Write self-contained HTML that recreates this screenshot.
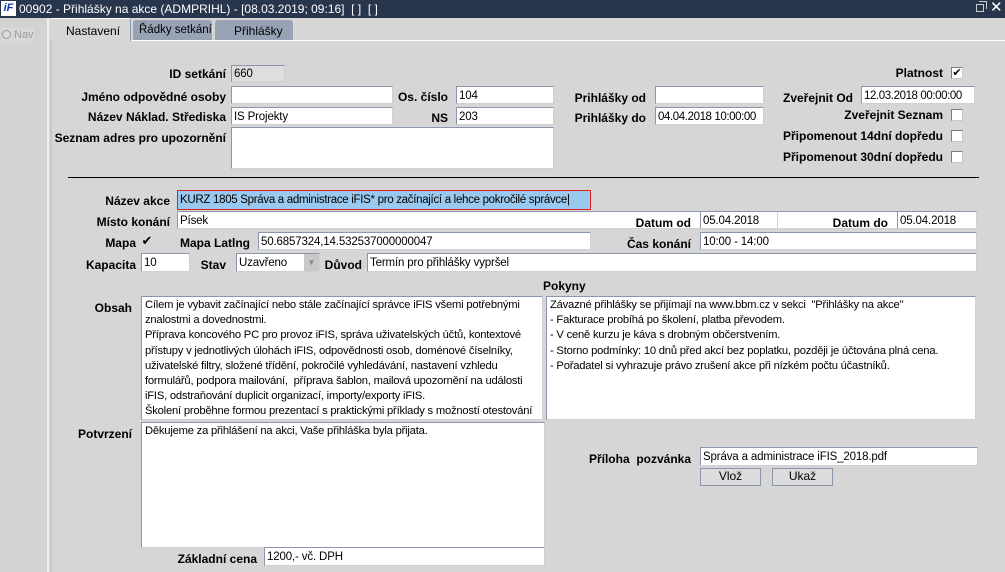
<!DOCTYPE html>
<html><head><meta charset="utf-8"><style>
*{margin:0;padding:0;box-sizing:border-box}
body{width:1005px;height:572px;overflow:hidden;background:#d6d6d6;font-family:"Liberation Sans",Arial,sans-serif;font-size:12px;color:#000;position:relative}
.a{position:absolute;white-space:nowrap}
.l{position:absolute;white-space:nowrap;font-weight:bold;font-size:12px;text-align:right;line-height:14px}
.i{position:absolute;background:#fff;border:1px solid #8a97ab;border-right-color:#d0d0d0;border-bottom-color:#d0d0d0;font-size:11.5px;line-height:16px;padding:1px 2px 0;white-space:nowrap;overflow:hidden;letter-spacing:-0.15px}
.t{white-space:normal;font-size:11.2px;line-height:15.2px;padding:1px 3px;letter-spacing:-0.2px}
.c{position:absolute;width:12px;height:12px;background:#fff;border:1px solid #7d7d7d;border-right-color:#c8c8c8;border-bottom-color:#c8c8c8;font-size:11px;line-height:10px;text-align:center}
.b{position:absolute;height:18px;border:1px solid #8a97ab;background:#dcdcdc;text-align:center;line-height:15px;font-size:12px}
</style></head><body>
<div class="a" style="left:0;top:0;width:1005px;height:18px;background:#27354d"></div>
<div class="a" style="left:1px;top:1px;width:15px;height:15px;background:#fff;color:#1733b3;font-weight:bold;font-style:italic;font-size:11px;line-height:15px;text-align:center">iF</div>
<div class="a" style="left:19px;top:1px;color:#fff;font-size:12px;line-height:16px">00902 - Přihlášky na akce (ADMPRIHL) - [08.03.2019; 09:16]&nbsp; [ ]&nbsp; [ ]</div>
<div class="a" style="left:976px;top:4px;width:8px;height:8px;border:1px solid #ccc;background:#27354d"></div>
<div class="a" style="left:979px;top:1px;width:8px;height:8px;border:1px solid #ccc;border-left:none;border-bottom:none"></div>
<div class="a" style="left:990px;top:-1px;color:#fff;font-size:15px;line-height:18px">✕</div>
<div class="a" style="left:0;top:18px;width:47px;height:554px;background:#d3d3d3"></div>
<div class="a" style="left:47px;top:18px;width:2px;height:554px;background:#f0f0f0"></div>
<div class="a" style="left:2px;top:28px;width:32px;height:15px;background:#d9d9d9;color:#9a9a9a;font-size:11px;line-height:15px"><span style="display:inline-block;width:9px;height:9px;border-radius:50%;border:1px solid #999;background:#ddd;vertical-align:-1px;margin-right:3px"></span>Nav</div>
<div class="a" style="left:50px;top:18px;width:81px;height:23px;background:#d6d6d6;border-top:1px solid #fff;border-right:1px solid #8a97ab;border-radius:3px 3px 0 0"></div>
<div class="a" style="left:66px;top:24px">Nastavení</div>
<div class="a" style="left:133px;top:20px;width:79px;height:20px;background:#97a3b5;border-radius:3px 3px 0 0"></div>
<div class="a" style="left:139px;top:24px;font-size:11.5px">Řádky setkání</div>
<div class="a" style="left:215px;top:20px;width:78px;height:20px;background:#97a3b5;border-radius:3px 3px 0 0"></div>
<div class="a" style="left:234px;top:24px">Přihlášky</div>
<div class="a" style="left:131px;top:40px;width:874px;height:1px;background:#fff"></div>
<div class="a" style="left:50px;top:41px;width:2px;height:531px;background:#c8c8c8"></div>

<div class="l" style="right:779px;top:67px">ID setkání</div>
<div class="i" style="left:231px;top:65px;width:54px;height:17px;background:#dedede;line-height:15px">660</div>
<div class="l" style="right:779px;top:90px">Jméno odpovědné osoby</div>
<div class="i" style="left:231px;top:86px;width:162px;height:18px"></div>
<div class="l" style="right:779px;top:110px">Název Náklad. Střediska</div>
<div class="i" style="left:231px;top:107px;width:162px;height:18px">IS Projekty</div>
<div class="l" style="right:779px;top:131px">Seznam adres pro upozornění</div>
<div class="i" style="left:231px;top:127px;width:323px;height:42px"></div>
<div class="l" style="right:557px;top:90px">Os. číslo</div>
<div class="i" style="left:456px;top:86px;width:98px;height:18px">104</div>
<div class="l" style="right:557px;top:111px">NS</div>
<div class="i" style="left:456px;top:107px;width:98px;height:18px">203</div>
<div class="l" style="right:359px;top:91px">Prihlášky od</div>
<div class="i" style="left:655px;top:86px;width:109px;height:18px"></div>
<div class="l" style="right:359px;top:111px">Prihlášky do</div>
<div class="i" style="left:655px;top:107px;width:109px;height:18px;letter-spacing:-0.4px">04.04.2018 10:00:00</div>
<div class="l" style="right:152px;top:91px">Zveřejnit Od</div>
<div class="i" style="left:861px;top:86px;width:114px;height:18px;letter-spacing:-0.4px">12.03.2018 00:00:00</div>
<div class="l" style="right:62px;top:66px">Platnost</div>
<div class="c" style="left:951px;top:67px">✔</div>
<div class="l" style="right:62px;top:108px">Zveřejnit Seznam</div>
<div class="c" style="left:951px;top:109px"></div>
<div class="l" style="right:62px;top:129px">Připomenout 14dní dopředu</div>
<div class="c" style="left:951px;top:130px"></div>
<div class="l" style="right:62px;top:150px">Připomenout 30dní dopředu</div>
<div class="c" style="left:951px;top:151px"></div>
<div class="a" style="left:68px;top:177px;width:911px;height:1px;background:#000"></div>

<div class="l" style="right:835px;top:194px">Název akce</div>
<div class="i" style="left:177px;top:190px;width:414px;height:20px;border:1px solid #e02020;background:#99c9ef;line-height:17px;letter-spacing:-0.3px">KURZ 1805 Správa a administrace iFIS* pro začínající a lehce pokročilé správce|</div>
<div class="l" style="right:835px;top:215px">Místo konání</div>
<div class="i" style="left:177px;top:211px;width:800px;height:18px">Písek</div>
<div class="l" style="right:869px;top:236px">Mapa</div>
<div class="c" style="left:141px;top:236px;border:none;background:transparent;font-size:13px">✔</div>
<div class="l" style="right:755px;top:236px">Mapa Latlng</div>
<div class="i" style="left:258px;top:232px;width:333px;height:18px">50.6857324,14.532537000000047</div>
<div class="l" style="right:314px;top:216px">Datum od</div>
<div class="i" style="left:700px;top:211px;width:78px;height:18px">05.04.2018</div>
<div class="l" style="right:117px;top:216px">Datum do</div>
<div class="i" style="left:897px;top:211px;width:80px;height:18px">05.04.2018</div>
<div class="l" style="right:314px;top:237px">Čas konání</div>
<div class="i" style="left:700px;top:232px;width:277px;height:18px">10:00 - 14:00</div>
<div class="l" style="right:869px;top:258px">Kapacita</div>
<div class="i" style="left:141px;top:253px;width:49px;height:19px">10</div>
<div class="l" style="right:779px;top:258px">Stav</div>
<div class="i" style="left:236px;top:253px;width:84px;height:19px">Uzavřeno</div>
<div class="a" style="left:304px;top:254px;width:15px;height:17px;background:#c8c8c8;color:#888;font-size:8px;line-height:17px;text-align:center">▼</div>
<div class="l" style="right:643px;top:258px">Důvod</div>
<div class="i" style="left:367px;top:253px;width:610px;height:19px">Termín pro přihlášky vypršel</div>
<div class="l" style="left:543px;top:279px">Pokyny</div>

<div class="l" style="right:873px;top:301px">Obsah</div>
<div class="i t" style="left:141px;top:296px;width:402px;height:124px">Cílem je vybavit začínající nebo stále začínající správce iFIS všemi potřebnými znalostmi a dovednostmi.<br>Příprava koncového PC pro provoz iFIS, správa uživatelských účtů, kontextové přístupy v jednotlivých úlohách iFIS, odpovědnosti osob, doménové číselníky, uživatelské filtry, složené třídění, pokročilé vyhledávání, nastavení vzhledu formulářů, podpora mailování,&nbsp; příprava šablon, mailová upozornění na události iFIS, odstraňování duplicit organizací, importy/exporty iFIS.<br>Školení proběhne formou prezentací s praktickými příklady s možností otestování</div>
<div class="i t" style="left:546px;top:296px;width:430px;height:124px">Závazné přihlášky se přijímají na www.bbm.cz v sekci&nbsp; "Přihlášky na akce"<br>- Fakturace probíhá po školení, platba převodem.<br>- V ceně kurzu je káva s drobným občerstvením.<br>- Storno podmínky: 10 dnů před akcí bez poplatku, později je účtována plná cena.<br>- Pořadatel si vyhrazuje právo zrušení akce při nízkém počtu účastníků.</div>
<div class="l" style="right:873px;top:427px">Potvrzení</div>
<div class="i t" style="left:141px;top:422px;width:404px;height:126px">Děkujeme za přihlášení na akci, Vaše přihláška byla přijata.</div>
<div class="l" style="right:748px;top:552px">Základní cena</div>
<div class="i" style="left:264px;top:547px;width:281px;height:19px">1200,- vč. DPH</div>
<div class="l" style="right:314px;top:452px">Příloha&nbsp; pozvánka</div>
<div class="i" style="left:700px;top:447px;width:278px;height:19px">Správa a administrace iFIS_2018.pdf</div>
<div class="b" style="left:700px;top:468px;width:61px">Vlož</div>
<div class="b" style="left:772px;top:468px;width:61px">Ukaž</div>
</body></html>
